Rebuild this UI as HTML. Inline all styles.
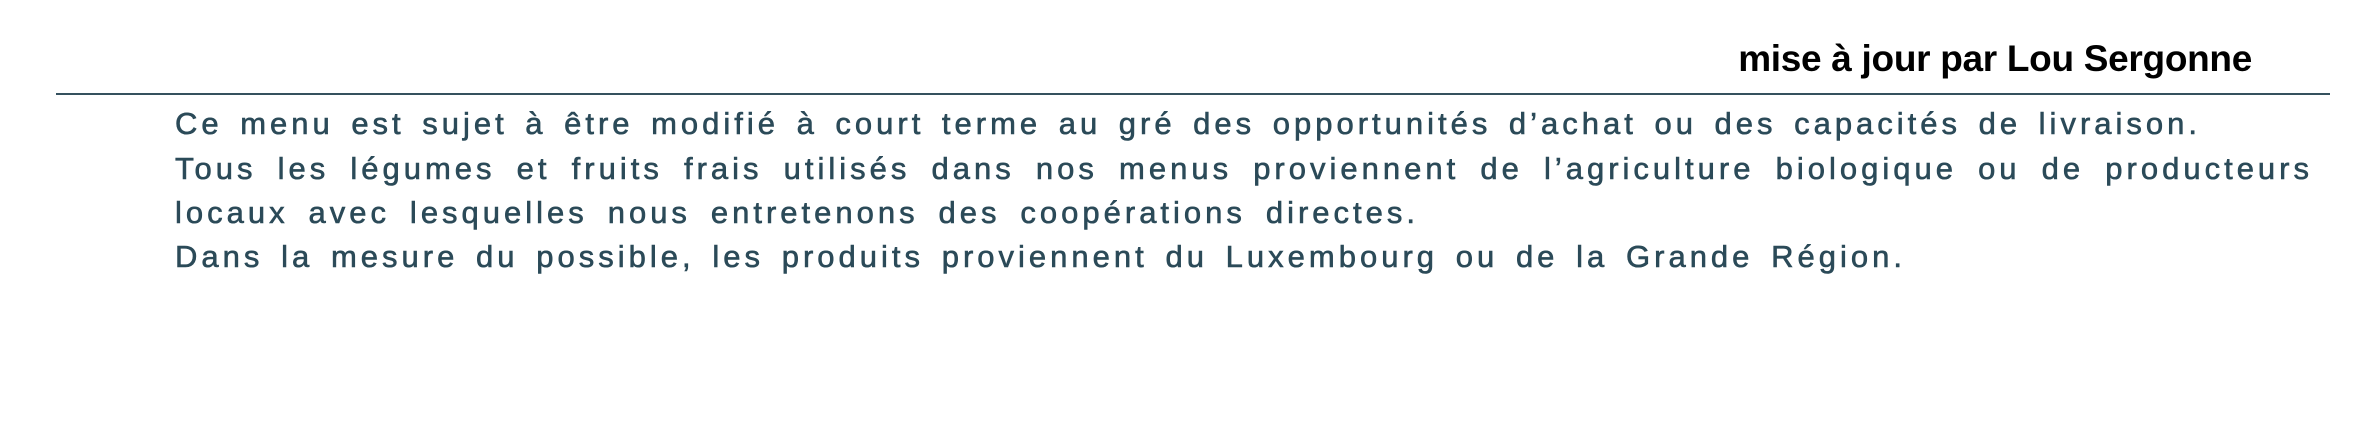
<!DOCTYPE html>
<html><head><meta charset="utf-8"><style>
html,body{margin:0;padding:0;background:#fff;width:2380px;height:424px;overflow:hidden;}
.hdr{position:absolute;right:128px;top:38px;font:bold 37px "Liberation Sans",sans-serif;color:#000;white-space:nowrap;letter-spacing:-0.3px;}
.rule{position:absolute;left:56px;top:93px;width:2274px;height:2px;background:#35515e;}
.l{position:absolute;left:175px;font:31px "Liberation Sans",sans-serif;-webkit-text-stroke:0.6px #2b4a58;color:#2b4a58;letter-spacing:4px;white-space:nowrap;text-align-last:justify;}
</style></head><body>
<div class="hdr">mise à jour par Lou Sergonne</div>
<div class="rule"></div>
<div class="l" style="top:106px;width:2026px">Ce menu est sujet à être modifié à court terme au gré des opportunités d’achat ou des capacités de livraison.</div>
<div class="l" style="top:151px;width:2138px">Tous les légumes et fruits frais utilisés dans nos menus proviennent de l’agriculture biologique ou de producteurs</div>
<div class="l" style="top:195px;width:1244px">locaux avec lesquelles nous entretenons des coopérations directes.</div>
<div class="l" style="top:239px;width:1731px">Dans la mesure du possible, les produits proviennent du Luxembourg ou de la Grande Région.</div>
</body></html>
